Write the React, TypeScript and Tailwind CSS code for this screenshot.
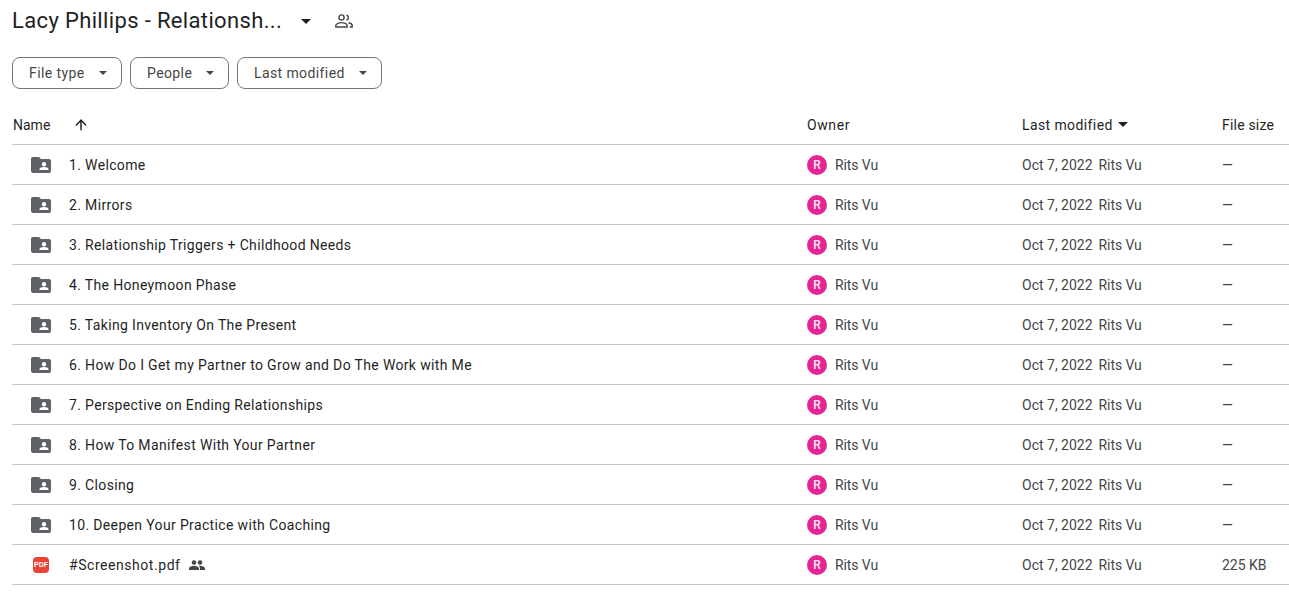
import { ArrowUp } from "lucide-react";

const font = "font-['Roboto',sans-serif]";

const rows = [
    "1. Welcome",
    "2. Mirrors",
    "3. Relationship Triggers + Childhood Needs",
    "4. The Honeymoon Phase",
    "5. Taking Inventory On The Present",
    "6. How Do I Get my Partner to Grow and Do The Work with Me",
    "7. Perspective on Ending Relationships",
    "8. How To Manifest With Your Partner",
    "9. Closing",
    "10. Deepen Your Practice with Coaching",
];

function Caret({ className }: { className: string }) {
    return (
        <svg viewBox="0 0 10 5" className={className} fill="currentColor">
            <path d="M0 0h10L5 5z" />
        </svg>
    );
}

function SharedFolder() {
    return (
        <svg viewBox="0 0 20 16" className="w-5 h-4 text-[#5f6368]" fill="currentColor">
            <path
                fillRule="evenodd"
                d="M2 0h6l2 2h8a2 2 0 0 1 2 2v10a2 2 0 0 1-2 2H2a2 2 0 0 1-2-2V2a2 2 0 0 1 2-2zm11 5a2.200 2.200 0 1 0 0 4.400 2.200 2.200 0 0 0 0-4.400zM8.500 13v-.8c0-1.500 3-2.200 4.500-2.200s4.500.7 4.500 2.200v.8z"
            />
        </svg>
    );
}

function PdfIcon() {
    return (
        <div className="w-4 h-4 rounded-sm bg-[#ea4335] flex items-center justify-center">
            <span className="text-[7px] leading-none font-bold text-white font-['Liberation_Sans',sans-serif]">PDF</span>
        </div>
    );
}

function PeopleIcon({ className }: { className: string }) {
    return (
        <svg viewBox="0 0 16 10" className={className} fill="currentColor">
            <circle cx="5" cy="2.5" r="2.3" />
            <circle cx="11" cy="2.5" r="2.3" />
            <path d="M0 10V8.6C0 6.8 3.3 5.8 5 5.8s5 1 5 2.8V10zM11 10V8.4c0-1-.5-1.8-1.2-2.4.4-.1.9-.2 1.2-.2 1.700 0 5 1 5 2.800V10z" />
        </svg>
    );
}

function PeopleOutline() {
    return (
        <svg viewBox="0 0 18 14" className="w-[18px] h-[14px] text-[#444746]" fill="none" stroke="currentColor" strokeWidth="1.400">
            <circle cx="6.500" cy="3.500" r="2.600" />
            <path d="M11.500 1a2.600 2.600 0 0 1 0 5" />
            <path d="M.8 13v-1.600c0-1.800 3.400-2.800 5.700-2.800s5.700 1 5.700 2.800V13z" />
            <path d="M13.500 8.800c2 .4 3.700 1.200 3.700 2.600V13h-2.500" />
        </svg>
    );
}

function Filter({ label, width }: { label: string; width: string }) {
    return (
        <button className={`${width} h-8 flex items-center justify-between pl-4 pr-[14px] border border-[#747775] rounded-lg text-sm tracking-[0.4px] text-[#444746]`}>
            {label}
            <Caret className="w-2 h-1 text-[#444746]" />
        </button>
    );
}

function Row({ name, pdf, size }: { name: string; pdf?: boolean; size: string }) {
    return (
        <div className="h-10 grid grid-cols-[795px_215px_200px_1fr] items-center border-b border-[#c7c7c7] text-sm">
            <div className="flex items-center">
                <div className="w-[57px] pl-[19px] flex justify-start">
                    {pdf ? <div className="pl-[2px]"><PdfIcon /></div> : <SharedFolder />}
                </div>
                <span className={`text-[#1f1f1f] ${pdf ? "tracking-[0.55px]" : "tracking-[0.35px]"}`}>{name}</span>
                {pdf && <PeopleIcon className="w-4 h-[10px] ml-2 text-[#444746]" />}
            </div>
            <div className="flex items-center gap-2 text-[#444746]">
                <div className="w-5 h-5 rounded-full bg-[#e52592] flex items-center justify-center text-xs font-medium text-white/90">R</div>
                <span className="tracking-[-0.1px]">Rits Vu</span>
            </div>
            <div className="flex items-center gap-[6px] text-[#444746]">
                <span>Oct 7, 2022</span>
                <span className="tracking-[-0.1px]">Rits Vu</span>
            </div>
            <div className="text-[#444746]">{size}</div>
        </div>
    );
}

export default function App() {
    return (
        <div className={`min-h-screen bg-white ${font}`}>
            <div className="h-[57px] flex items-start pl-3 pt-[7px]">
                <h1 className="text-[22px] leading-7 tracking-[0.35px] text-[#1f1f1f]">Lacy Phillips - Relationsh...</h1>
                <Caret className="w-[10px] h-[5px] ml-[19px] mt-[12px] text-[#1f1f1f]" />
                <div className="ml-6 mt-[7px]">
                    <PeopleOutline />
                </div>
            </div>

            <div className="flex gap-2 pl-3">
                <Filter label="File type" width="w-[110px]" />
                <Filter label="People" width="w-[99px]" />
                <Filter label="Last modified" width="w-[145px]" />
            </div>

            <div className="ml-3 mt-4">
                <div className="h-10 grid grid-cols-[795px_215px_200px_1fr] items-center border-b border-[#c7c7c7] text-sm text-[#1f1f1f]">
                    <div className="flex items-center pl-px">
                        <span>Name</span>
                        <ArrowUp className="w-4 h-4 ml-[23px]" strokeWidth={2.200} />
                    </div>
                    <div className="tracking-[0.6px]">Owner</div>
                    <div className="flex items-center gap-[5px] tracking-[0.4px]">
                        Last modified
                        <Caret className="w-[10px] h-[5px] text-[#1f1f1f]" />
                    </div>
                    <div className="tracking-[0.2px]">File size</div>
                </div>
                {rows.map((name) => (
                    <Row key={name} name={name} size="—" />
                ))}
                <Row name="#Screenshot.pdf" pdf size="225 KB" />
            </div>
        </div>
    );
}
